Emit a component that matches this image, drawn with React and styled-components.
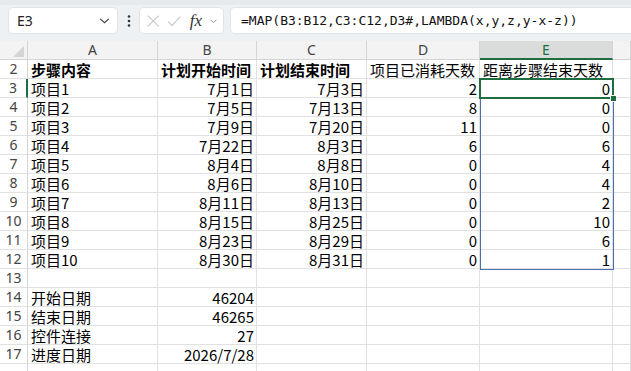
import React from 'react';
import styled, { createGlobalStyle } from 'styled-components';

const GlobalStyle = createGlobalStyle`
  html, body {
    margin: 0;
    padding: 0;
    background: #ffffff;
    overflow: hidden;
  }
  * {
    box-sizing: border-box;
  }
`;

const Page = styled.div`
  width: 631px;
  height: 371px;
  overflow: hidden;
  font-family: 'Noto Sans CJK SC', 'Noto Sans', sans-serif;
`;

const Toolbar = styled.div`
  height: 41px;
  display: flex;
  align-items: flex-start;
  padding: 7px 0 0 8px;
  background: linear-gradient(#e6eaec 0, #e6eaec 5px, #eef1f3 5px);
`;

const Box = styled.div`
  height: 27px;
  background: #ffffff;
  border: 1px solid #e2e5e7;
  border-radius: 5px;
  display: flex;
  align-items: center;
`;

const NameBox = styled(Box)`
  width: 110px;
  padding: 0 6px 0 8px;
  justify-content: space-between;
  font-family: 'Noto Sans', 'Open Sans', sans-serif;
  font-size: 14px;
  color: #222;
`;

const Dots = styled.div`
  width: 21px;
  height: 27px;
  display: flex;
  align-items: center;
  justify-content: center;
`;

const FxBox = styled(Box)`
  width: 85px;
  padding: 0 5px 0 7px;
  gap: 7px;
`;

const FxText = styled.span`
  font-family: 'Liberation Serif', 'DejaVu Serif', serif;
  font-style: italic;
  font-size: 17px;
  color: #333;
  margin-left: 2px;
  line-height: 1;
`;

const FormulaBox = styled(Box)`
  flex: 1;
  margin-left: 6px;
  border-right: none;
  border-radius: 5px 0 0 5px;
  padding-left: 10px;
  font-family: 'DejaVu Sans Mono', 'Liberation Mono', monospace;
  font-size: 13px;
  color: #111;
  white-space: nowrap;
`;

const Sheet = styled.div`
  position: relative;
`;

const Grid = styled.div`
  display: grid;
  grid-template-columns: 28px 130px 99px 110px 113px 133px 1fr;
  grid-auto-rows: 19px;
`;

const Corner = styled.div`
  background: #f3f3f3;
  border-right: 1px solid #d5d5d5;
  border-bottom: 1px solid #d5d5d5;
  position: relative;
`;

const ColHead = styled.div`
  background: ${p => (p.$active ? '#d9dcdb' : '#f3f3f3')};
  color: ${p => (p.$active ? '#1e6e42' : '#444')};
  border-right: 1px solid #d5d5d5;
  border-bottom: ${p => (p.$active ? '2px solid #1e6e42' : '1px solid #d5d5d5')};
  display: flex;
  align-items: center;
  justify-content: center;
  font-family: 'Noto Sans', 'Open Sans', sans-serif;
  font-size: 14px;
  line-height: 1;
`;

const RowHead = styled.div`
  background: #ffffff;
  color: #444;
  border-right: ${p => (p.$active ? '2px solid #1e6e42' : '1px solid #d5d5d5')};
  border-bottom: 1px solid #e1e1e1;
  display: flex;
  align-items: center;
  justify-content: center;
  font-family: 'Noto Sans', 'Open Sans', sans-serif;
  font-size: 14px;
  line-height: 1;
`;

const Cell = styled.div`
  border-right: 1px solid #e1e1e1;
  border-bottom: 1px solid #e1e1e1;
  display: flex;
  align-items: center;
  justify-content: ${p => (p.$right ? 'flex-end' : 'flex-start')};
  padding: ${p => (p.$right ? '0 2px 0 0' : '0 0 0 3px')};
  font-size: 15px;
  font-weight: ${p => (p.$bold ? 700 : 400)};
  color: #000;
  white-space: nowrap;
  overflow: visible;
  line-height: 1;
`;

const SpillRange = styled.div`
  position: absolute;
  left: 480px;
  top: 38px;
  width: 134px;
  height: 191px;
  border: 1px solid #4a6fb0;
  pointer-events: none;
`;

const ActiveCell = styled.div`
  position: absolute;
  left: 479px;
  top: 37px;
  width: 135px;
  height: 21px;
  border: 2px solid #1e6e42;
  pointer-events: none;
`;

const FillHandle = styled.div`
  position: absolute;
  left: 610px;
  top: 54px;
  width: 7px;
  height: 7px;
  background: #1e6e42;
  border: 1px solid #ffffff;
`;

const Triangle = styled.div`
  position: absolute;
  right: 3px;
  bottom: 2px;
  width: 0;
  height: 0;
  border-left: 11px solid transparent;
  border-bottom: 11px solid #d4d4d4;
`;

const Chevron = ({ size = 12, color = '#555' }) => (
  <svg width={size} height={size} viewBox="0 0 12 12">
    <polyline points="2,4.5 6,8 10,4.5" fill="none" stroke={color} strokeWidth="1.2" />
  </svg>
);

// F is only a sliver at the right edge, its letter falls outside the window
const cols = ['A', 'B', 'C', 'D', 'E', ''];

const rows = [
  [2, '步骤内容', '计划开始时间', '计划结束时间', '项目已消耗天数', '距离步骤结束天数'],
  [3, '项目1', '7月1日', '7月3日', '2', '0'],
  [4, '项目2', '7月5日', '7月13日', '8', '0'],
  [5, '项目3', '7月9日', '7月20日', '11', '0'],
  [6, '项目4', '7月22日', '8月3日', '6', '6'],
  [7, '项目5', '8月4日', '8月8日', '0', '4'],
  [8, '项目6', '8月6日', '8月10日', '0', '4'],
  [9, '项目7', '8月11日', '8月13日', '0', '2'],
  [10, '项目8', '8月15日', '8月25日', '0', '10'],
  [11, '项目9', '8月23日', '8月29日', '0', '6'],
  [12, '项目10', '8月30日', '8月31日', '0', '1'],
  [13, '', '', '', '', ''],
  [14, '开始日期', '46204', '', '', ''],
  [15, '结束日期', '46265', '', '', ''],
  [16, '控件连接', '27', '', '', ''],
  [17, '进度日期', '2026/7/28', '', '', ''],
];

const App = () => {
  return (
    <Page>
      <GlobalStyle />
      <Toolbar>
        <NameBox>
          <span>E3</span>
          <Chevron size={13} color="#444" />
        </NameBox>
        <Dots>
          <svg width="4" height="12" viewBox="0 0 4 12">
            <circle cx="2" cy="1.5" r="1.3" fill="#333" />
            <circle cx="2" cy="6" r="1.3" fill="#333" />
            <circle cx="2" cy="10.5" r="1.3" fill="#333" />
          </svg>
        </Dots>
        <FxBox>
          <svg width="14" height="14" viewBox="0 0 14 14">
            <path d="M1 1 L13 13 M13 1 L1 13" stroke="#c6c6c6" strokeWidth="1.2" />
          </svg>
          <svg width="16" height="14" viewBox="0 0 16 14">
            <polyline points="1,7.5 5.5,12 15,2" fill="none" stroke="#c6c6c6" strokeWidth="1.2" />
          </svg>
          <FxText>fx</FxText>
          <Chevron size={10} color="#888" />
        </FxBox>
        <FormulaBox>=MAP(B3:B12,C3:C12,D3#,LAMBDA(x,y,z,y-x-z))</FormulaBox>
      </Toolbar>

      <Sheet>
        <Grid>
          <Corner>
            <Triangle />
          </Corner>
          {cols.map((c, i) => (
            <ColHead key={i} $active={c === 'E'}>{c}</ColHead>
          ))}
          {rows.map(([n, a, b, c, d, e]) => (
            <React.Fragment key={n}>
              <RowHead $active={n === 3}>{n}</RowHead>
              <Cell $bold={n === 2}>{a}</Cell>
              <Cell $bold={n === 2} $right={n !== 2}>{b}</Cell>
              <Cell $bold={n === 2} $right={n !== 2}>{c}</Cell>
              <Cell $right={n !== 2}>{d}</Cell>
              <Cell $right={n !== 2}>{e}</Cell>
              <Cell />
            </React.Fragment>
          ))}
          {/* row 18 is cut by the window edge, only its top shows */}
          <RowHead />
          <Cell />
          <Cell />
          <Cell />
          <Cell />
          <Cell />
          <Cell />
        </Grid>
        <SpillRange />
        <ActiveCell />
        <FillHandle />
      </Sheet>
    </Page>
  );
};

export default App;
